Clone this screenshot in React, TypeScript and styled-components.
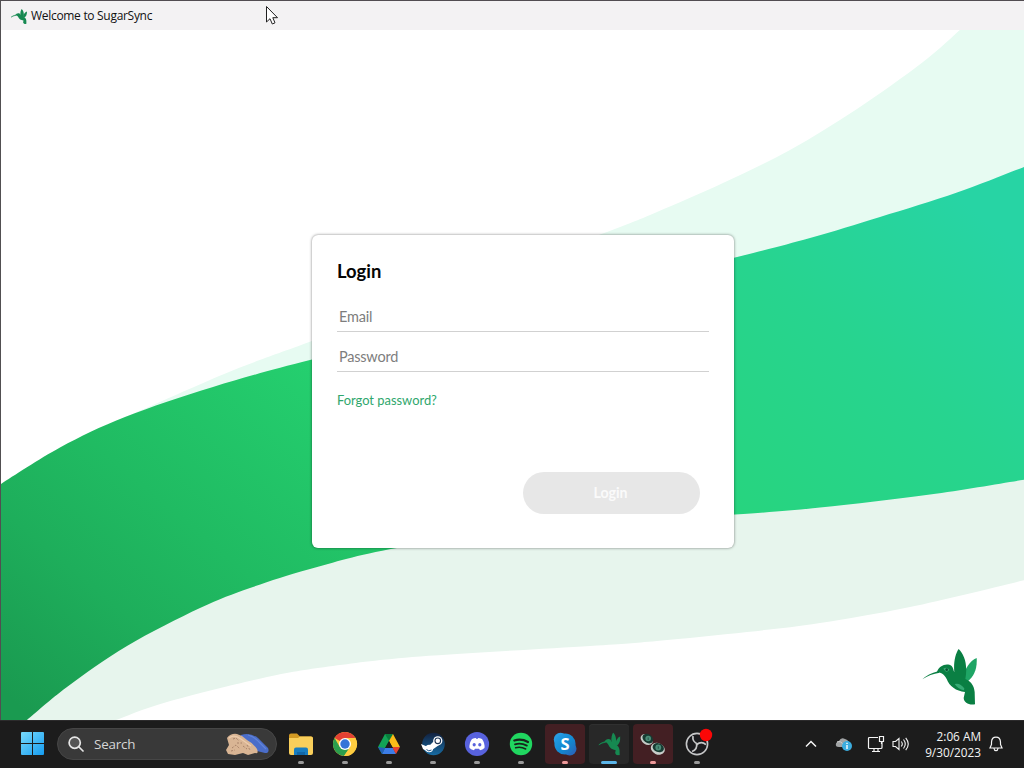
import React from "react";
import styled, { createGlobalStyle, css } from "styled-components";

const GlobalStyle = createGlobalStyle`
  *, *::before, *::after { box-sizing: border-box; }
  html, body { margin: 0; padding: 0; overflow: hidden; }
  button, input { font: inherit; }
`;

const Desktop = styled.div`
  position: relative;
  display: flex;
  flex-direction: column;
  width: 1024px;
  height: 768px;
  overflow: hidden;
  font-family: "Open Sans", "Noto Sans", sans-serif;
`;

const AppWindow = styled.main`
  display: flex;
  flex-direction: column;
  height: 720px;
  background: #fff;
  border-top: 1px solid #514d51;
  border-left: 1px solid #514f51;
`;

const TitleBar = styled.header`
  display: flex;
  align-items: center;
  gap: 4px;
  height: 29px;
  padding: 1px 0 0 10px;
  background: #f3f2f3;
`;

const TitleText = styled.h1`
  margin: 0;
  font-size: 12px;
  line-height: 18px;
  font-weight: 400;
  letter-spacing: -0.3px;
  color: #111;
`;

const Stage = styled.section`
  display: grid;
  width: 1023px;
  height: 690px;
  grid-template: 690px / 1023px;
`;

const Scenery = styled.svg`
  grid-area: 1 / 1;
  display: block;
`;

const StageContent = styled.div`
  grid-area: 1 / 1;
  z-index: 1;
  padding: 205px 0 0 311px;
`;

const LogoCorner = styled.div`
  grid-area: 1 / 1;
  align-self: end;
  justify-self: end;
  width: 55px;
  height: 56px;
  margin: 0 47px 15px 0;
`;

const LoginCard = styled.form`
  display: flex;
  flex-direction: column;
  width: 422px;
  height: 313px;
  padding: 25px 25px 34px;
  background: #fff;
  border-radius: 6px;
  box-shadow: 0 0 3px rgba(0, 0, 0, 0.5);
  font-family: Lato, sans-serif;
`;

const Heading = styled.h2`
  margin: 0 0 18px;
  font-size: 18.4px;
  line-height: 23px;
  font-weight: 700;
  color: #050505;
`;

const Field = styled.input`
  width: 372px;
  height: 31px;
  margin-bottom: 9px;
  padding: 0 2px;
  border: 0;
  border-bottom: 1px solid #d1d1d1;
  outline: 0;
  background: transparent;
  font-size: 14.5px;
  letter-spacing: -0.22px;
  &::placeholder { color: #7d7d7d; opacity: 1; }
`;

const ForgotLink = styled.a`
  align-self: flex-start;
  margin-top: 10px;
  font-size: 12.9px;
  line-height: 18px;
  color: #2fa76d;
`;

const SubmitButton = styled.button`
  align-self: flex-end;
  width: 177px;
  height: 42px;
  margin: auto 9px 0 0;
  padding: 0 2px 1px 0;
  border: 0;
  border-radius: 21px;
  background: #e7e7e7;
  color: #fafafa;
  font-size: 14.2px;
  font-weight: 700;
`;

const Taskbar = styled.footer`
  display: flex;
  align-items: center;
  height: 48px;
  padding: 0 0 2px 20px;
  background: #1c1c1c;
  border-top: 1px solid #2c2b2c;
`;

const SearchBox = styled.div`
  display: flex;
  align-items: center;
  width: 220px;
  height: 32px;
  margin-left: 12px;
  padding: 0 6px 0 10px;
  border: 1px solid #464646;
  border-radius: 16px;
  background: #393939;
  color: #d6d6d6;
  font-size: 13.4px;
`;

const SearchLabel = styled.span`
  flex: 1;
  margin-left: 10px;
  letter-spacing: -0.2px;
`;

const Apps = styled.nav`
  display: flex;
  gap: 4px;
  margin-left: 4px;
`;

type TileState = "idle" | "alert" | "active";

const AppTile = styled.div<{ $state: TileState }>`
  display: flex;
  flex-direction: column;
  align-items: center;
  justify-content: space-between;
  width: 40px;
  height: 40px;
  padding-top: 6px;
  border-radius: 4px;
  ${({ $state }) => $state === "alert" && css`background: #431f23;`}
  ${({ $state }) => $state === "active" && css`background: #282828; box-shadow: inset 0 1px 0 #303030;`}
`;

const Indicator = styled.span<{ $state: TileState }>`
  width: ${({ $state }) => ($state === "active" ? 16 : 6)}px;
  height: 3px;
  border-radius: 2px;
  background: ${({ $state }) => ($state === "active" ? "#5bb5e8" : $state === "alert" ? "#ee9a9a" : "#9a9a9a")};
`;

const Tray = styled.div`
  display: flex;
  align-items: center;
  flex: 1;
  justify-content: flex-end;
  padding-right: 21px;
  color: #f4f4f4;
`;

const TrayIcon = styled.svg<{ $gap: number }>`
  flex: none;
  margin-right: ${({ $gap }) => $gap}px;
  fill: none;
  stroke: currentColor;
`;

const Clock = styled.div`
  display: flex;
  flex-direction: column;
  align-items: flex-end;
  margin-right: 8px;
  font-size: 11.8px;
  line-height: 16px;
  letter-spacing: 0;
  white-space: nowrap;
`;

const Pointer = styled.svg`
  position: absolute;
  left: 265px;
  top: 5px;
`;

type Point = [number, number];

/* Cubic segments through every point, tangents taken from the neighbours. */
function curve(pts: Point[]): string {
  return pts
    .slice(0, -1)
    .map((p, i) => {
      const before = pts[i - 1] ?? p;
      const next = pts[i + 1];
      const after = pts[i + 2] ?? next;
      const c1 = [p[0] + (next[0] - before[0]) / 6, p[1] + (next[1] - before[1]) / 6];
      const c2 = [next[0] - (after[0] - p[0]) / 6, next[1] - (after[1] - p[1]) / 6];
      return `C${c1.join(" ")} ${c2.join(" ")} ${next.join(" ")}`;
    })
    .join("");
}

const ribbonTop: Point[] = [[0, 484.5], [60, 447.5], [125, 417], [213, 387], [310, 360], [450, 327], [600, 291], [735, 257.5], [810, 238], [880, 217], [957, 192.5], [1025, 166.5]];
const ribbonBottom: Point[] = [[1025, 479.5], [930, 494.5], [820, 507.5], [735, 514.5], [560, 525], [397, 548], [310, 569], [250, 588], [200, 608], [127, 646], [67, 687], [27, 720]];
const mistTop: Point[] = [[110, 424], [187, 390], [240, 367.5], [312, 341], [450, 290], [607, 232], [657, 212], [723, 183], [790, 150], [857, 109], [923, 62], [961, 29]];
const mistBottom: Point[] = [[1025, 580], [910, 607], [820, 623], [747, 632], [657, 641], [590, 646], [420, 656.5], [333, 666], [267, 677], [167, 702], [116, 720]];

function Ribbons() {
  return (
    <Scenery width="1023" height="690" viewBox="1 30 1023 690">
      <defs>
        <linearGradient id="ribbon" gradientUnits="userSpaceOnUse" x1="60" y1="740" x2="700" y2="-20">
          <stop offset="0" stopColor="#1a9a50" />
          <stop offset="0.14" stopColor="#1eae5b" />
          <stop offset="0.25" stopColor="#20bb62" />
          <stop offset="0.47" stopColor="#25d170" />
          <stop offset="0.62" stopColor="#27d47f" />
          <stop offset="0.82" stopColor="#27d48f" />
          <stop offset="1" stopColor="#27d4a4" />
        </linearGradient>
      </defs>
      <path fill="#e7fbf2" d={`M110 424${curve(mistTop)}L1025 29V220L300 400Z`} />
      <path fill="#e7f5ed" d={`M1025 450V580${curve(mistBottom)}L0 720L300 540Z`} />
      <path fill="url(#ribbon)" d={`M0 484.5${curve(ribbonTop)}V479.5${curve(ribbonBottom)}H0Z`} />
    </Scenery>
  );
}

function Hummingbird({ width, height, flat }: { width: number; height: number; flat?: boolean }) {
  const dark = flat ? "#168951" : "#0a7f43";
  const light = flat ? "#168951" : "#1fa565";
  return (
    <svg width={width} height={height} viewBox="37 40 165 168" preserveAspectRatio="none">
      <path d="M201 67C180 76 165 98 160 132L173 138C193 122 203 101 201 67Z" fill={light} />
      <path d="M38 131Q55 115 85 107L90 111Q61 115 38 131Z" fill={dark} stroke={flat ? dark : "none"} strokeWidth="5" />
      <path d="M82 109C88 90 111 81 126 91C131 96 131 104 134 110C131 82 137 54 147 40C164 57 175 86 167 130C183 137 193 148 195 169L196 206C177 209 163 201 162 187L166 169C139 166 119 152 111 130C105 117 95 111 82 109Z" fill={dark} />
      {!flat && (
        <>
          <path d="M135 145Q151 140 164 158L163 164Q144 160 135 145Z" fill="#36aa74" />
          <path d="M101 99Q112 92 119 102Q116 108 109 108Z" fill="#41ac78" />
          <circle cx="111" cy="102" r="4" fill="#075332" />
        </>
      )}
    </svg>
  );
}

function FolderIcon() {
  return (
    <svg width="26" height="28" viewBox="0 0 26 28">
      <path d="M1 5.5Q1 3.5 3 3.5H9L12 6.5H23Q25 6.5 25 8.5V13H1Z" fill="#d39a23" />
      <path d="M1 8H10L12 6.5H23Q25 6.5 25 8.5V23Q25 25 23 25H3Q1 25 1 23Z" fill="#f9cf5b" />
      <path d="M6 25V19.5Q6 17.5 8 17.5H18Q20 17.5 20 19.5V25Z" fill="#187dc0" />
      <path d="M9 22H17V25H9Z" fill="#1267a7" />
    </svg>
  );
}

function ChromeIcon() {
  return (
    <svg width="26" height="28" viewBox="0 0 26 28">
      <circle cx="13" cy="14" r="12" fill="#ffcd40" />
      <path d="M13 14L2.6 8A12 12 0 0 1 23.4 8Z" fill="#e34133" />
      <path d="M2.6 8A12 12 0 0 0 12 26L18.2 17H13L7.8 17Z" fill="#2b9e4d" />
      <path d="M13 8H23.4A12 12 0 0 1 12 26L18.2 17Z" fill="#ffcd40" />
      <circle cx="13" cy="14" r="6" fill="#fff" />
      <circle cx="13" cy="14" r="4.7" fill="#3475d8" />
    </svg>
  );
}

function DriveIcon() {
  return (
    <svg width="26" height="28" viewBox="0 0 26 28">
      <path d="M9 4H17L6 24L2 17Z" fill="#12a456" />
      <path d="M9 4H17L13 11Z" fill="#087d3c" />
      <path d="M17 4L24 17H16L13 11Z" fill="#fbbc18" />
      <path d="M9 18H17L20 24H6Z" fill="#3c7de7" />
      <path d="M2 17L6 24L9 18Z" fill="#235fbd" />
      <path d="M16 17H24L20 24Z" fill="#e64331" />
      <path d="M13 11L17 18H9Z" fill="#1c1c1c" />
    </svg>
  );
}

function SteamIcon() {
  return (
    <svg width="26" height="28" viewBox="0 0 26 28">
      <defs><linearGradient id="steam" x2="0" y2="1"><stop stopColor="#12213f" /><stop offset="1" stopColor="#176ba2" /></linearGradient></defs>
      <circle cx="13.5" cy="14" r="11.3" fill="url(#steam)" />
      <path d="M1 14L8 17L14 11L19 15L12 20L8 22L3 19Z" fill="#fff" />
      <circle cx="9.2" cy="18.5" r="3.8" fill="#fff" />
      <path d="M6.5 19.5Q8.5 22 11.5 20" fill="none" stroke="#18548a" strokeWidth="1" />
      <circle cx="17.8" cy="10.8" r="4.6" fill="#fff" />
      <circle cx="17.8" cy="10.8" r="2.8" fill="none" stroke="#1c3555" strokeWidth="1.1" />
    </svg>
  );
}

function DiscordIcon() {
  return (
    <svg width="26" height="28" viewBox="0 0 26 28">
      <circle cx="13" cy="14" r="12.1" fill="#5862dd" />
      <path d="M8 9Q10 8 12 8L12.5 9H13.5L14 8Q16 8 18 9Q21 13 20.5 18Q18.5 20 16 20.2L15 18.7H11L10 20.2Q7.5 20 5.5 18Q5 13 8 9Z" fill="#fff" />
      <ellipse cx="10.2" cy="14.7" rx="1.6" ry="1.8" fill="#5862dd" />
      <ellipse cx="15.8" cy="14.7" rx="1.6" ry="1.8" fill="#5862dd" />
    </svg>
  );
}

function SpotifyIcon() {
  return (
    <svg width="26" height="28" viewBox="0 0 26 28">
      <circle cx="13" cy="14" r="11.2" fill="#20d760" />
      <g fill="none" stroke="#18241c" strokeLinecap="round">
        <path d="M6.3 10.5Q13.5 8.4 20 12" strokeWidth="2.2" />
        <path d="M7 14.3Q13 12.5 18.8 15.6" strokeWidth="1.9" />
        <path d="M7.6 17.8Q12.8 16.4 17.7 19" strokeWidth="1.5" />
      </g>
    </svg>
  );
}

const SkypeLetter = styled.text`
  font: 700 16.5px "Open Sans", sans-serif;
`;

function SkypeIcon() {
  return (
    <svg width="26" height="28" viewBox="0 0 26 28">
      <defs><linearGradient id="skype" x2="1" y2="1"><stop stopColor="#299fe8" /><stop offset=".55" stopColor="#1289d2" /><stop offset="1" stopColor="#2864b8" /></linearGradient></defs>
      <circle cx="8.5" cy="9.5" r="6.7" fill="#299ce1" />
      <circle cx="17.8" cy="18.8" r="6.7" fill="#2669bd" />
      <circle cx="13" cy="14" r="10.6" fill="url(#skype)" />
      <SkypeLetter x="13" y="20" textAnchor="middle" fill="#fff">S</SkypeLetter>
    </svg>
  );
}

function LensesIcon() {
  return (
    <svg width="26" height="28" viewBox="0 0 26 28">
      <g transform="translate(-.5 .5)">
        <ellipse cx="7.2" cy="9" rx="6.6" ry="4.8" transform="rotate(35 7.2 9)" fill="#c5cbc7" />
        <ellipse cx="18.3" cy="18.3" rx="7.2" ry="5.6" transform="rotate(25 18.3 18.3)" fill="#c9cdca" />
        <ellipse cx="8.3" cy="8.1" rx="5.8" ry="4.3" transform="rotate(35 8.3 8.1)" fill="#173b32" />
        <ellipse cx="18.8" cy="17.2" rx="5.8" ry="4.4" transform="rotate(20 18.8 17.2)" fill="#173b32" />
        <circle cx="8.7" cy="8" r="2.8" fill="#4b8c77" />
        <circle cx="18.8" cy="17" r="2.9" fill="#4b8c77" />
        <path d="M8.7 7V9.5M18.8 15.8V18.2" stroke="#26564a" strokeWidth="1" />
      </g>
    </svg>
  );
}

function ObsIcon() {
  return (
    <svg width="26" height="28" viewBox="0 0 26 28" overflow="visible">
      <circle cx="13" cy="14" r="10.6" fill="#1b1b1e" stroke="#c6c7c8" strokeWidth="1.6" />
      <g fill="none" stroke="#c6c7c8" strokeWidth="1.7">
        <path d="M9 6Q8 12 14 14" />
        <path d="M9 6Q8 12 14 14" transform="rotate(120 13 14)" />
        <path d="M9 6Q8 12 14 14" transform="rotate(240 13 14)" />
      </g>
      <circle cx="22" cy="5" r="6.2" fill="#fb0707" />
    </svg>
  );
}

function BirdTileIcon() {
  return (
    <svg width="26" height="28" viewBox="0 0 26 28" overflow="visible">
      <g transform="translate(2.5 2.5)"><Hummingbird width={22} height={23} flat /></g>
    </svg>
  );
}

function StartIcon() {
  return (
    <svg width="25" height="25" viewBox="0 0 25 25">
      <defs><linearGradient id="start" gradientUnits="userSpaceOnUse" x1="1" y1="1" x2="24" y2="24"><stop stopColor="#78d9fa" /><stop offset="1" stopColor="#159cf0" /></linearGradient></defs>
      <path fill="url(#start)" d="M2 1H12V12H1V2Q1 1 2 1ZM13 1H23Q24 1 24 2V12H13ZM1 13H12V24H2Q1 24 1 23ZM13 13H24V23Q24 24 23 24H13Z" />
    </svg>
  );
}

function SearchHighlight() {
  return (
    <svg width="46" height="26" viewBox="0 0 46 26">
      <path d="M17 4Q26 1 34 7L44 17Q46 22 41 22L33 20L17 7Z" fill="#4a6dc9" />
      <path d="M24 4Q31 6 36 12L42 18" stroke="#6284d8" strokeWidth="1.2" fill="none" />
      <path d="M3 7Q7 2 13 3L18 5L23 9Q29 12 33 18Q35 23 31 22L24 24L19 22L11 24L4 23L2 19L5 14Z" fill="#d9b594" />
      <path d="M9 8L12 7L15 10M8 17L12 14L16 18M13 12L18 12M19 15L23 18M7 20L11 19M23 14L26 19" fill="none" stroke="#a9836a" strokeWidth="1" strokeDasharray="2 1.5" />
      <path d="M5 7Q10 3 17 8L27 15" fill="none" stroke="#edccad" strokeWidth="1.2" />
    </svg>
  );
}

const apps: { name: string; state: TileState; Icon: () => React.ReactElement }[] = [
  { name: "File Explorer", state: "idle", Icon: FolderIcon },
  { name: "Chrome", state: "idle", Icon: ChromeIcon },
  { name: "Drive", state: "idle", Icon: DriveIcon },
  { name: "Steam", state: "idle", Icon: SteamIcon },
  { name: "Discord", state: "idle", Icon: DiscordIcon },
  { name: "Spotify", state: "idle", Icon: SpotifyIcon },
  { name: "Skype", state: "alert", Icon: SkypeIcon },
  { name: "SugarSync", state: "active", Icon: BirdTileIcon },
  { name: "Lenses", state: "alert", Icon: LensesIcon },
  { name: "OBS", state: "idle", Icon: ObsIcon },
];

export default function App() {
  return (
    <>
      <GlobalStyle />
      <Desktop>
        <AppWindow>
          <TitleBar>
            <Hummingbird width={16} height={15} flat />
            <TitleText>Welcome to SugarSync</TitleText>
          </TitleBar>
          <Stage>
            <Ribbons />
            <StageContent>
              <LoginCard onSubmit={(e) => e.preventDefault()}>
                <Heading>Login</Heading>
                <Field type="email" placeholder="Email" />
                <Field type="password" placeholder="Password" />
                <ForgotLink>Forgot password?</ForgotLink>
                <SubmitButton disabled>Login</SubmitButton>
              </LoginCard>
            </StageContent>
            <LogoCorner><Hummingbird width={55} height={56} /></LogoCorner>
          </Stage>
        </AppWindow>
        <Taskbar>
          <StartIcon />
          <SearchBox>
            <svg width="16" height="16" viewBox="0 0 16 16" fill="#555" stroke="#e6e6e6" strokeWidth="1.7" strokeLinecap="round">
              <circle cx="6.7" cy="6.7" r="5.6" /><path d="M11 11L15 15" />
            </svg>
            <SearchLabel>Search</SearchLabel>
            <SearchHighlight />
          </SearchBox>
          <Apps>
            {apps.map(({ name, state, Icon }) => (
              <AppTile key={name} $state={state}>
                <Icon />
                <Indicator $state={state} />
              </AppTile>
            ))}
          </Apps>
          <Tray>
            <TrayIcon $gap={18} width="12" height="8" viewBox="0 0 12 8" strokeWidth="1.5"><path d="M1 6.5L6 1.5L11 6.5" /></TrayIcon>
            <TrayIcon $gap={14} width="18" height="16" viewBox="0 0 18 16">
              <path d="M4 11Q0 11 1 7.5Q2 5 4 5Q6 1 10 3Q14 4 14 8V11Z" fill="#a1a4a5" stroke="none" />
              <path d="M2 6Q6 4 9 10" stroke="#d0d0d0" />
              <circle cx="12" cy="10" r="5" fill="#3caddf" stroke="none" />
              <path d="M12 9V13M12 6.8V8" stroke="#fff" strokeWidth="1.4" />
            </TrayIcon>
            <TrayIcon $gap={7} width="18" height="18" viewBox="0 0 18 18" strokeWidth="1.2">
              <path d="M11 2.5H2.5Q1.5 2.5 1.5 3.5V12.5Q1.5 13.5 2.5 13.5H14Q15 13.5 15 12.5V7M5 16.5H13M7 13.5V16.5M11 13.5V16.5M12.5 1.5H16.5V6.5H12.5ZM14.5 6.5V9" />
            </TrayIcon>
            <TrayIcon $gap={15} width="18" height="16" viewBox="0 0 18 16" strokeWidth="1.1">
              <path d="M1 5.5H3.5L7 2.5V13.5L3.5 10.5H1ZM9.3 5.5Q11.3 8 9.3 10.5M11.5 3.5Q15 8 11.5 12.5M13.7 1.8Q18.8 8 13.7 14.2" />
            </TrayIcon>
            <Clock><span>2:06 AM</span><span>9/30/2023</span></Clock>
            <TrayIcon $gap={0} width="14" height="16" viewBox="0 0 14 16" strokeWidth="1.2">
              <path d="M7 1.2Q11.2 1.2 11.5 6V8.5L13 12H1L2.5 8.5V6Q2.8 1.2 7 1.2ZM5 12.5Q5.3 14.7 7 14.7Q8.7 14.7 9 12.5" />
            </TrayIcon>
          </Tray>
        </Taskbar>
        <Pointer width="14" height="21" viewBox="0 0 14 21">
          <path d="M1.5 1.5V17L5 13.7L7.3 19L10 17.8L7.8 12.7H12.5Z" fill="#fff" stroke="#202020" />
        </Pointer>
      </Desktop>
    </>
  );
}
